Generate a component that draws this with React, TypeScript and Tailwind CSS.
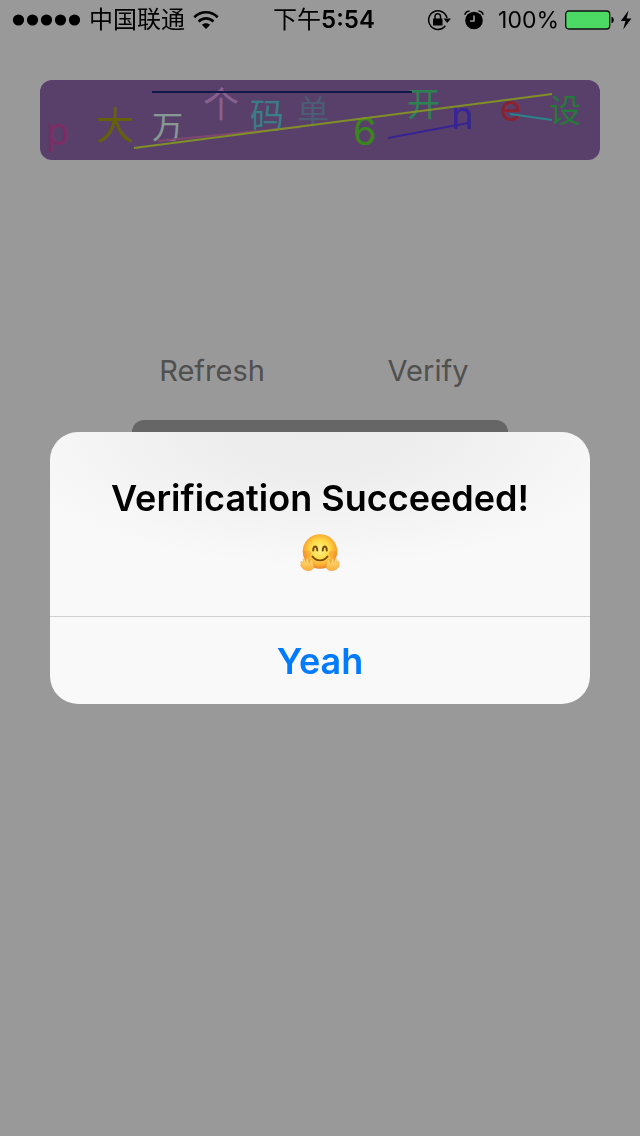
const glyphs = [
  { char: 'p', x: 6, y: 65, size: 38, color: '#cb4ea8' },
  { char: '大', x: 56, y: 59, size: 38, color: '#a8a010' },
  { char: '万', x: 112, y: 58, size: 31, color: '#e0fff5' },
  { char: '个', x: 163, y: 38, size: 36, color: '#e6a0f0' },
  { char: '码', x: 210, y: 48, size: 34, color: '#62d0e0' },
  { char: '单', x: 257, y: 43, size: 32, color: '#7f9bc0' },
  { char: '6', x: 313, y: 65, size: 38, color: '#62e030' },
  { char: '开', x: 367, y: 36, size: 33, color: '#4ed88a' },
  { char: 'n', x: 411, y: 49, size: 38, color: '#5a3cff' },
  { char: 'e', x: 460, y: 41, size: 37, color: '#e63950' },
  { char: '设', x: 509, y: 42, size: 32, color: '#40c865' },
]

const strokes = [
  { x1: 112, y1: 12, x2: 372, y2: 12, color: '#1b2b78' },
  { x1: 118, y1: 61, x2: 260, y2: 47, color: '#d577b8' },
  { x1: 94, y1: 68, x2: 512, y2: 14, color: '#d8f040' },
  { x1: 348, y1: 58, x2: 428, y2: 43, color: '#5a3cf5' },
  { x1: 470, y1: 34, x2: 512, y2: 40, color: '#46dce6' },
]

function Captcha() {
  return (
    <div className="overflow-hidden rounded-xl bg-[#936cb2]">
      <svg viewBox="0 0 560 80" className="block w-full" role="img" aria-label="Captcha">
        {glyphs.map((g) => (
          <text
            key={g.char}
            x={g.x}
            y={g.y}
            fontSize={g.size}
            fill={g.color}
            fontFamily='Inter, "Noto Sans CJK SC", sans-serif'
          >
            {g.char}
          </text>
        ))}
        {strokes.map((s) => (
          <line key={s.color} x1={s.x1} y1={s.y1} x2={s.x2} y2={s.y2} stroke={s.color} strokeWidth="2" />
        ))}
      </svg>
    </div>
  )
}

function WifiIcon() {
  return (
    <svg width="26" height="20" viewBox="0 0 26 20" aria-hidden="true">
      <g fill="none" stroke="#000" strokeWidth="2.6">
        <path d="M1.3 7.2C8 .6 18 .6 24.700 7.2" />
        <path d="M5.500 11.500C10 7.300 16 7.300 20.500 11.500" />
      </g>
      <path d="M8.800 14.800C11 12.600 15 12.600 17.200 14.800L13 19Z" />
    </svg>
  )
}

function RotationLockIcon() {
  return (
    <svg width="25" height="22" viewBox="0 0 25 22" aria-hidden="true">
      <path d="M18.300 16.800A9.300 9.300 0 1 1 20 9" fill="none" stroke="#000" strokeWidth="1.500" />
      <path d="M16.500 9.500H24L20.250 14Z" />
      <rect x="6" y="9.500" width="9.500" height="7" rx="0.600" />
      <path d="M8 10V7.600a2.750 2.750 0 0 1 5.500 0V10" fill="none" stroke="#000" strokeWidth="1.500" />
    </svg>
  )
}

function AlarmIcon() {
  return (
    <svg width="20" height="20" viewBox="0 0 20 20" aria-hidden="true">
      <circle cx="10" cy="10.500" r="8.800" />
      <path d="M.8 4.800C1.300 2.500 3 1.200 5.500 1M19.200 4.800C18.700 2.500 17 1.200 14.500 1" fill="none" stroke="#000" strokeWidth="1.400" />
      <path d="M10 5.500V11H6" fill="none" stroke="#999" strokeWidth="1.600" />
    </svg>
  )
}

function BatteryIcon() {
  return (
    <svg width="49" height="20" viewBox="0 0 49 20" aria-hidden="true">
      <rect x="0.700" y="1" width="44" height="18" rx="3" fill="#4cd964" stroke="#111" strokeWidth="1.300" />
      <path d="M46.500 6.800C49.500 7.500 49.500 12.500 46.500 13.200Z" />
    </svg>
  )
}

function BoltIcon() {
  return (
    <svg width="12" height="20" viewBox="0 0 12 20" aria-hidden="true">
      <path d="M8.500.5.800 11H5.400L3.200 19.500 11.400 8.500H6.600Z" />
    </svg>
  )
}

function StatusBar() {
  return (
    <header className="relative z-20 grid h-10 grid-cols-[1fr_auto_1fr] items-center pr-2 pl-3 text-2xl text-black">
      <div className="flex items-center gap-2">
        <svg width="69" height="12" viewBox="0 0 69 12" aria-hidden="true">
          {[6.500, 20.500, 34.500, 48.500, 62.500].map((cx) => (
            <circle key={cx} cx={cx} cy="6" r="5.600" />
          ))}
        </svg>
        <span className="whitespace-nowrap">中国联通</span>
        <WifiIcon />
      </div>
      <div className="pl-1">
        下午<span className="font-semibold">5:54</span>
      </div>
      <div className="flex items-center justify-end gap-1.5">
        <div className="flex items-center gap-3 pr-2">
          <RotationLockIcon />
          <AlarmIcon />
        </div>
        <span className="text-[23px]">100%</span>
        <BatteryIcon />
        <BoltIcon />
      </div>
    </header>
  )
}

function HuggingFace() {
  return (
    <svg width="40" height="40" viewBox="0 0 40 40" role="img" aria-label="Hugging face">
      <defs>
        <radialGradient id="face" cx="0.5" cy="0.45" r="0.54">
          <stop offset="0" stopColor="#fff08a" />
          <stop offset="0.5" stopColor="#ffdc48" />
          <stop offset="0.82" stopColor="#fbae33" />
          <stop offset="1" stopColor="#ea842a" />
        </radialGradient>
        <linearGradient id="hand" x1="0" y1="0" x2="0" y2="1">
          <stop offset="0" stopColor="#ffe37a" />
          <stop offset="1" stopColor="#f9ae3c" />
        </linearGradient>
      </defs>
      <circle cx="20" cy="19.500" r="17.300" fill="url(#face)" />
      <ellipse cx="7.500" cy="22" rx="4" ry="3.500" fill="#f58b2c" opacity=".4" />
      <ellipse cx="32.500" cy="22" rx="4" ry="3.500" fill="#f58b2c" opacity=".4" />
      <path d="M13.200 18.500C13.400 13 17 13 17.300 18.500M22.700 18.500C23 13 26.600 13 26.800 18.500" fill="none" stroke="#7a4a08" strokeWidth="2" strokeLinecap="round" />
      <path d="M12.500 24.500C16 29.600 24 29.600 27.500 24.500" fill="none" stroke="#7a4a08" strokeWidth="1.900" strokeLinecap="round" />
      <path id="left-hand" d="M1.500 29.500 4 31 2.800 27.500C3.500 26.500 4.600 27 5 28L6.200 30.500 6 27C6.800 26.200 7.900 26.800 8.200 28L9.500 31.500C9.800 29.500 10.500 27.500 12 27.600C13.600 28 12.700 31 13.500 33.500C14 36.500 12 38.500 9 38.500C5.500 38.700 3.500 37.500 2.300 36L.6 33.500C.4 32.500 1.500 32.300 2.200 33L1 31C.6 30.200 .8 29.600 1.500 29.500Z" fill="url(#hand)" stroke="#f0a63c" strokeWidth=".6" />
      <use href="#left-hand" transform="translate(40 0) scale(-1 1)" />
    </svg>
  )
}

function AlertDialog() {
  return (
    <div className="fixed inset-0 z-10 flex items-center justify-center bg-black/40 px-6">
      <div
        role="alertdialog"
        aria-labelledby="alert-title"
        className="w-full max-w-[540px] overflow-hidden rounded-[28px] bg-[#f9f9f9] bg-[radial-gradient(ellipse_60%_50%_at_50%_0%,#ececec_0%,#eeeeee_35%,#f9f9f9_100%)] text-center"
      >
        <div className="flex flex-col items-center gap-2 px-8 pt-11 pb-11">
          <h1 id="alert-title" className="text-[36px] leading-[44px] font-semibold text-black">
            Verification Succeeded!
          </h1>
          <div className="pt-1">
            <HuggingFace />
          </div>
        </div>
        <button type="button" className="block h-22 w-full border-t border-[#d2d2d4] text-[36px] font-semibold text-[#007aff]">
          Yeah
        </button>
      </div>
    </div>
  )
}

export default function App() {
  return (
    <div className="min-h-screen bg-white font-[Inter,'Noto_Sans_CJK_SC',sans-serif]">
      <StatusBar />
      <main className="px-10 pt-10">
        <Captcha />
        <div className="mx-auto mt-44 grid max-w-[432px] grid-cols-2 text-[29px] leading-[70px] text-[#858585]">
          <button type="button">Refresh</button>
          <button type="button">Verify</button>
        </div>
        <div className="mx-auto mt-3.5 h-60 max-w-[376px] rounded-xl bg-[#aaaaaa]" />
      </main>
      <AlertDialog />
    </div>
  )
}
